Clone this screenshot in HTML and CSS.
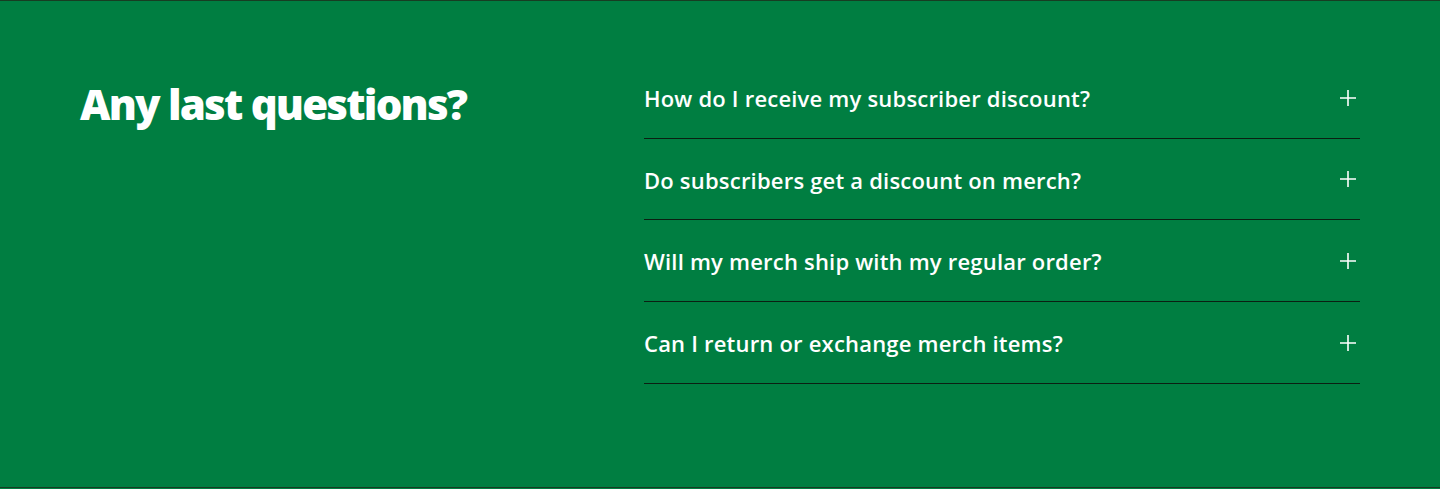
FILE: index.html
```html
<!DOCTYPE html>
<html>
<head>
    <title>FAQ</title>
    <link rel="stylesheet" href="styles.css">
</head>
<body>
    <section class="faq">
        <h2 class="faq-title">Any last questions?</h2>
        <ul class="faq-list">
            <li class="faq-item">
                <span class="faq-question">How do I receive my subscriber discount?</span>
                <svg class="faq-icon" viewBox="0 0 18 18"><path d="M9 1v16M1 9h16"/></svg>
            </li>
            <li class="faq-item">
                <span class="faq-question">Do subscribers get a discount on merch?</span>
                <svg class="faq-icon" viewBox="0 0 18 18"><path d="M9 1v16M1 9h16"/></svg>
            </li>
            <li class="faq-item">
                <span class="faq-question">Will my merch ship with my regular order?</span>
                <svg class="faq-icon" viewBox="0 0 18 18"><path d="M9 1v16M1 9h16"/></svg>
            </li>
            <li class="faq-item">
                <span class="faq-question">Can I return or exchange merch items?</span>
                <svg class="faq-icon" viewBox="0 0 18 18"><path d="M9 1v16M1 9h16"/></svg>
            </li>
        </ul>
    </section>
</body>
</html>
```

FILE: styles.css
```css
body {
    margin: 0;
    font-family: "Open Sans", sans-serif;
    background-color: #007e41;
    color: #fff;
}
.faq {
    display: grid;
    grid-template-columns: 1fr 716px;
    padding: 56px 80px 0;
    height: 488px;
    box-sizing: border-box;
    border-top: 1px solid #173d22;
    border-bottom: 1px solid #173d22;
}
.faq-title {
    margin: 23px 0 0;
    font-size: 42px;
    font-weight: 800;
    line-height: 48px;
    letter-spacing: -1.8px;
}
.faq-list {
    list-style-type: none;
    margin: 0;
    padding: 0;
}
.faq-item {
    display: flex;
    align-items: center;
    justify-content: space-between;
    padding: 27px 0 24.7px;
    line-height: 29px;
    border-bottom: 1px solid #0b1f12;
}
.faq-question {
    font-size: 22px;
    font-weight: 600;
    letter-spacing: 0.2px;
}
.faq-icon {
    width: 18px;
    height: 18px;
    margin-right: 3px;
    margin-top: -2px;
    fill: none;
    stroke: #fff;
    stroke-width: 1.6;
}
```
